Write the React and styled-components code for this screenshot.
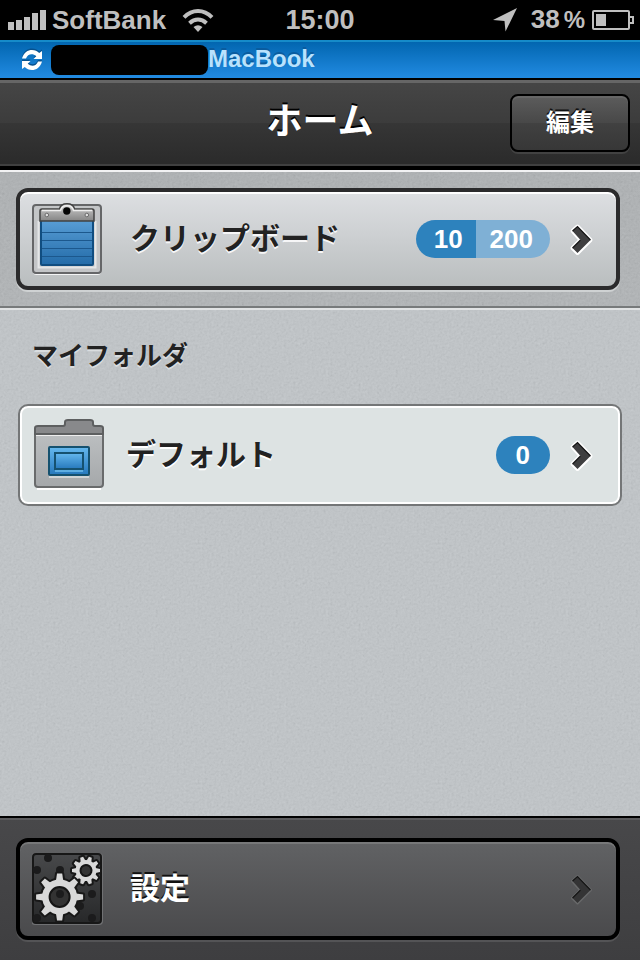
import React from "react";
import styled, { createGlobalStyle, css } from "styled-components";

const latin = '"Liberation Sans", Arial, sans-serif';
const japanese = '"Liberation Sans", "Noto Sans CJK JP", sans-serif';

const grain =
  "url(\"data:image/svg+xml,%3Csvg xmlns='http://www.w3.org/2000/svg' width='240' height='240'%3E%3Cfilter id='n' x='0' y='0' width='100%25' height='100%25'%3E%3CfeTurbulence type='fractalNoise' baseFrequency='0.43' numOctaves='2' stitchTiles='stitch'/%3E%3CfeColorMatrix values='0.5 0.5 0.5 0 -0.25 0.5 0.5 0.5 0 -0.25 0.5 0.5 0.5 0 -0.25 0 0 0 0 0.12'/%3E%3C/filter%3E%3Crect width='240' height='240' filter='url(%23n)'/%3E%3C/svg%3E\")";

const GlobalStyle = createGlobalStyle`
  *, *::before, *::after { box-sizing: border-box; }
  body { margin: 0; background: #434345; }
`;

const Screen = styled.div`
  display: flex;
  flex-direction: column;
  min-height: 100vh;
  background: ${grain}, #c0c5c8;
  font-family: ${japanese};
`;

const StatusBar = styled.div`
  display: grid;
  grid-template-columns: 1fr auto 1fr;
  align-items: center;
  height: 40px;
  padding: 0 6px 2px;
  background: #000;
  color: #bfbfbf;
  font: bold 26px/38px ${latin};
`;

const StatusGroup = styled.div`
  display: flex;
  align-items: center;
  justify-content: ${(p) => (p.$end ? "flex-end" : "flex-start")};
  white-space: nowrap;
`;

const Clock = styled.time`
  font-size: 27px;
`;

const Carrier = styled.span`
  margin: 0 16px 0 6px;
`;

const Charge = styled.span`
  margin: 0 7px 0 14px;
`;

const Percent = styled.span`
  margin-left: 4px;
  font-size: 24px;
`;

const SyncBar = styled.div`
  display: flex;
  align-items: center;
  height: 38px;
  padding-left: 20px;
  border-top: 2px solid #168bc9;
  background: linear-gradient(#0266b0, #228be2);
`;

const HiddenName = styled.span`
  width: 157px;
  height: 30px;
  margin-left: 7px;
  border-radius: 8px;
  background: #000;
`;

const DeviceName = styled.span`
  padding-bottom: 2px;
  color: #b9e2fd;
  font: bold 24px/34px ${latin};
  text-shadow: 0 -2px 0 #0a5c9f;
`;

const NavBar = styled.header`
  display: grid;
  grid-template-columns: 1fr auto 1fr;
  align-items: center;
  height: 92px;
  padding: 0 10px;
  border-top: 2px solid #000;
  border-bottom: 4px solid #000;
  background: linear-gradient(#464646, #3c3c3c 50%, #363636 50%, #2a2a2a);
  box-shadow: inset 0 3px 0 #666, inset 0 -2px 0 #404040;
`;

const Title = styled.h1`
  grid-column: 2;
  margin: 0 0 2px;
  color: #fff;
  font-size: 36px;
  line-height: 48px;
  text-shadow: 0 -2px 0 #000;
`;

const EditButton = styled.button`
  justify-self: end;
  width: 120px;
  height: 58px;
  padding: 0;
  border: 2px solid #000;
  border-radius: 8px;
  background: linear-gradient(#5c5c5c, #484848 50%, #414141 50%, #373737);
  box-shadow: inset 0 2px 0 #666, 0 2px 0 #424242;
  color: #fff;
  font: bold 24px/32px ${japanese};
  text-shadow: 0 -2px 0 #111;
`;

const ClipboardSection = styled.section`
  padding: 16px 20px 16px 16px;
  border-top: 2px solid #f2f2f3;
  border-bottom: 2px solid #777a7b;
  background: ${grain}, linear-gradient(#adb1b3, #b0b4b6);
`;

const FolderSection = styled.section`
  padding: 28px 18px 24px;
  border-top: 2px solid #e1e3e4;
`;

const SectionTitle = styled.h2`
  margin: 0 0 30px 14px;
  color: #222;
  font-size: 26px;
  line-height: 36px;
  text-shadow: 0 2px 0 #dadddf;
`;

const tones = {
  light: css`
    padding: 0 22px 0 12px;
    border: 4px solid #2b2b2c;
    border-radius: 12px;
    background: linear-gradient(#dddfe2, #babebf);
    box-shadow: inset 0 2px 0 #fff, 0 2px 0 #cfd2d3;
    color: #222;
    text-shadow: 0 2px 0 #f6f6f7;
  `,
  pale: css`
    padding: 0 26px 0 14px;
    border: 2px solid #747677;
    border-radius: 10px;
    background: #dde3e3;
    box-shadow: inset 0 0 0 2px #fff;
    color: #222;
    text-shadow: 0 2px 0 #fff;
  `,
  dark: css`
    padding: 0 22px 0 12px;
    border: 4px solid #000;
    border-radius: 12px;
    background: linear-gradient(#616264, #4a4a4c);
    box-shadow: inset 0 2px 0 #777879, 0 2px 0 #545456;
    color: #fff;
    text-shadow: 0 -2px 0 #111;
  `,
};

const Card = styled.a`
  display: flex;
  align-items: center;
  height: 102px;
  text-decoration: none;
  ${(p) => tones[p.$tone]}
`;

const CardLabel = styled.span`
  flex: 1;
  padding-left: ${(p) => (p.$near ? "20px" : "26px")};
  font-size: 30px;
  font-weight: bold;
  line-height: 40px;
  white-space: nowrap;
`;

const Badge = styled.span`
  display: flex;
  margin-right: 18px;
  overflow: hidden;
  border-radius: 19px;
  text-shadow: none;
`;

const countPadding = {
  used: "0 13px 0 18px",
  limit: "0 17px 0 14px",
  total: "0 20px",
};

const Count = styled.span`
  padding: ${(p) => countPadding[p.$kind]};
  background: ${(p) => (p.$kind === "limit" ? "#7fb0d5" : "#2d82bd")};
  color: #fff;
  font: bold 26px/38px ${latin};
`;

const Footer = styled.footer`
  margin-top: auto;
  padding: 20px 20px 20px 16px;
  border-top: 2px solid #000;
  background: linear-gradient(#48484a, #3e3e40);
  box-shadow: inset 0 2px 0 #5b5b5d;
`;

const SignalIcon = () => (
  <svg width="40" height="21" viewBox="0 0 40 21" fill="#bfbfbf" aria-hidden="true">
    <path d="M2 13h6v8H2zM10 11h6v10h-6zM18 8h6v13h-6zM26 4h6v17h-6zM34 1h6v20h-6z" />
  </svg>
);

const WifiIcon = () => (
  <svg width="32" height="24" viewBox="0 0 32 24" aria-hidden="true">
    <g fill="none" stroke="#bfbfbf" strokeWidth="4">
      <path d="M2 9.3Q8.2 3 16 3t14 6.300" />
      <path d="M7.500 15.200Q11.500 11.600 16 11.600t8.500 3.600" />
    </g>
    <path d="M11.500 19Q16 15.400 20.500 19L16 24z" fill="#bfbfbf" />
  </svg>
);

const LocationIcon = () => (
  <svg width="24" height="24" viewBox="0 0 24 24" aria-hidden="true">
    <path d="M24 0 12.500 23.500 11.500 13 0 12z" fill="#bfbfbf" />
  </svg>
);

const BatteryIcon = () => (
  <svg width="42" height="20" viewBox="0 0 42 20" aria-hidden="true">
    <rect x="1" y="1" width="36" height="18" rx="1" fill="none" stroke="#bfbfbf" strokeWidth="2" />
    <path d="M38 7h3v6h-3" fill="none" stroke="#bfbfbf" strokeWidth="2" />
    <path d="M4 4h10v12H4z" fill="#bfbfbf" />
  </svg>
);

const SyncIcon = () => (
  <svg width="24" height="24" viewBox="0 0 24 24" aria-hidden="true">
    {["#07528f", "#fff"].map((paint, layer) => (
      <g key={paint} fill={paint} transform={layer ? undefined : "translate(0 -1.500)"}>
        <path d="M2 10.500C3.500 4.500 8 2 12 2c3 0 5.300 1 7.200 3L22 3v8h-8.500l2.800-2.800C12.500 4.800 7.500 6 6 10.500z" />
        <path d="M22 13.500c-1.500 6-6 8.500-10 8.500-3 0-5.300-1-7.200-3L2 21v-8h8.500l-2.800 2.800c3.800 3.400 8.800 2.200 10.300-2.300z" />
      </g>
    ))}
  </svg>
);

const ClipboardIcon = () => (
  <svg width="72" height="72" viewBox="0 0 72 72" aria-hidden="true">
    <defs>
      <linearGradient id="page" x2="0" y2="1">
        <stop stopColor="#5ba0d8" />
        <stop offset="1" stopColor="#236ba8" />
      </linearGradient>
      <linearGradient id="clip" x2="0" y2="1">
        <stop stopColor="#d0d0d0" />
        <stop offset="1" stopColor="#858585" />
      </linearGradient>
    </defs>
    <rect x="1" y="3.500" width="68" height="68" rx="3" fill="none" stroke="#f3f4f5" strokeWidth="1" />
    <rect x="1" y="2" width="68" height="68" rx="3" fill="#c3c5c7" stroke="#656668" strokeWidth="2" />
    <path d="M6.500 18v46.500h57V18" fill="none" stroke="#e4e6e7" strokeWidth="2" />
    <rect x="9" y="15" width="52" height="47" rx="1" fill="url(#page)" stroke="#104d80" strokeWidth="2" />
    <path d="M10 29.500h50M10 37.500h50M10 45.500h50M10 53.500h50" stroke="#1c588d" />
    <path
      d="M10 6h17.500C29-1 41-1 42.500 6H60q2 0 2 2v10H8V8q0-2 2-2z"
      fill="url(#clip)" stroke="#424242" strokeWidth="1.500"
    />
    <path d="M10 7.500h18.500C30 1 40 1 41.500 7.500H60" fill="none" stroke="#eee" strokeWidth="1.500" />
    <circle cx="34.800" cy="8" r="3.700" fill="#050505" />
    <g fill="#e0e0e0" stroke="#6c6c6c">
      <circle cx="14.800" cy="12" r="1.800" />
      <circle cx="54.800" cy="12" r="1.800" />
    </g>
  </svg>
);

const FolderIcon = () => (
  <svg width="72" height="72" viewBox="0 0 72 72" aria-hidden="true">
    <defs>
      <linearGradient id="folder" x2="0" y2="1">
        <stop stopColor="#bcbfc1" />
        <stop offset="1" stopColor="#a5a8aa" />
      </linearGradient>
      <linearGradient id="picture" x2="0" y2="1">
        <stop stopColor="#65b8ee" />
        <stop offset="1" stopColor="#2678bc" />
      </linearGradient>
    </defs>
    <path d="M3 70h64" stroke="#fff" strokeWidth="2" />
    <path d="M1 13h68v52q0 3-3 3H4q-3 0-3-3z" fill="url(#folder)" stroke="#696b6c" strokeWidth="2" />
    <path d="M2 16h66" stroke="#eee" strokeWidth="2" />
    <path
      d="M1 14V8q0-2 3-2h25q2 0 2-2V2q0-2 3-2h22q3 0 3 2v2q0 2 2 2h5q3 0 3 2v6z"
      transform="translate(0 1)"
      fill="#88898b" stroke="#5d5f60" strokeWidth="2"
    />
    <path d="M15 58h40" stroke="#d0d4d5" strokeWidth="2" />
    <rect x="15" y="28" width="40" height="28" rx="1" fill="url(#picture)" stroke="#15516f" strokeWidth="2" />
    <rect x="21" y="34" width="28" height="16" fill="url(#picture)" stroke="#15516f" strokeWidth="2" />
    <path d="M21 52h28" stroke="#5eaee2" strokeWidth="2" />
  </svg>
);

const Gear = ({ cx, cy, outer, body, hole, teeth, offset, tooth }) => (
  <g transform={`translate(${cx} ${cy}) rotate(${offset})`}>
    {["#181818", "#d9d9d9"].map((paint, layer) => (
      <g key={paint} fill={paint} stroke={layer ? "none" : paint} strokeWidth="4" strokeLinejoin="round">
        {Array.from({ length: teeth }, (_, i) => (
          <path
            key={i}
            d={`M${-tooth - 1} ${-body + 1}L${-tooth} ${-outer}H${tooth}L${tooth + 1} ${-body + 1}z`}
            transform={`rotate(${(i * 360) / teeth})`}
          />
        ))}
        <circle r={body} />
      </g>
    ))}
    <circle r={hole} fill="#333" stroke="#151515" strokeWidth="2" />
  </g>
);

const GearsIcon = () => (
  <svg width="72" height="72" viewBox="0 0 72 72" aria-hidden="true">
    <defs>
      <linearGradient id="tile" x2="0" y2="1">
        <stop stopColor="#48494b" />
        <stop offset="1" stopColor="#272829" />
      </linearGradient>
    </defs>
    <rect x="-1" y="0" width="72" height="72" rx="4" fill="#707173" />
    <rect x="1" y="1" width="68" height="69" rx="3" fill="url(#tile)" stroke="#171717" strokeWidth="2" />
    <g fill="#1b1b1c">
      <circle cx="16" cy="5" r="4" />
      <circle cx="5" cy="17" r="4" />
      <circle cx="28" cy="17" r="4" />
      <circle cx="60" cy="41" r="4" />
      <circle cx="48" cy="53" r="4" />
      <circle cx="5" cy="65" r="4" />
      <circle cx="60" cy="65" r="4" />
    </g>
    <Gear cx={54} cy={17.5} outer={14} body={10.5} hole={5.5} teeth={10} offset={18} tooth={1.5} />
    <Gear cx={27.6} cy={44} outer={23.5} body={17.5} hole={10} teeth={8} offset={0} tooth={2.6} />
    <circle cx="28" cy="41" r="4" fill="#1b1b1c" />
  </svg>
);

const Chevron = ({ dark }) => (
  <svg width="26" height="36" viewBox="0 0 26 36" aria-hidden="true">
    <path
      d="M4.500 10 9.500 5.500 22.500 19 9.500 32 4.500 27 12.500 19z"
      fill={dark ? "#68696a" : "#fff"}
      stroke={dark ? "#68696a" : "#fff"}
      strokeWidth={dark ? 3 : 4}
      strokeLinejoin="round"
    />
    <path d="M4.500 10 9.500 5.500 22.500 19 9.500 32 4.500 27 12.500 19z" fill={dark ? "#343435" : "#3f3f40"} />
    <path d="M4.500 10 9.500 5.500 22.500 19M4.500 27 12.500 19" fill="none" stroke="#151515" strokeWidth="1.200" />
  </svg>
);

export default function App() {
  return (
    <Screen>
      <GlobalStyle />
      <StatusBar>
        <StatusGroup>
          <SignalIcon />
          <Carrier>SoftBank</Carrier>
          <WifiIcon />
        </StatusGroup>
        <Clock>15:00</Clock>
        <StatusGroup $end>
          <LocationIcon />
          <Charge>
            38<Percent>%</Percent>
          </Charge>
          <BatteryIcon />
        </StatusGroup>
      </StatusBar>
      <SyncBar>
        <SyncIcon />
        <HiddenName />
        <DeviceName>MacBook</DeviceName>
      </SyncBar>
      <NavBar>
        <Title>ホーム</Title>
        <EditButton type="button">編集</EditButton>
      </NavBar>
      <ClipboardSection>
        <Card href="#clipboard" $tone="light">
          <ClipboardIcon />
          <CardLabel>クリップボード</CardLabel>
          <Badge>
            <Count $kind="used">10</Count>
            <Count $kind="limit">200</Count>
          </Badge>
          <Chevron />
        </Card>
      </ClipboardSection>
      <FolderSection>
        <SectionTitle>マイフォルダ</SectionTitle>
        <Card href="#default" $tone="pale">
          <FolderIcon />
          <CardLabel $near>デフォルト</CardLabel>
          <Badge>
            <Count $kind="total">0</Count>
          </Badge>
          <Chevron />
        </Card>
      </FolderSection>
      <Footer>
        <Card href="#settings" $tone="dark">
          <GearsIcon />
          <CardLabel>設定</CardLabel>
          <Chevron dark />
        </Card>
      </Footer>
    </Screen>
  );
}
